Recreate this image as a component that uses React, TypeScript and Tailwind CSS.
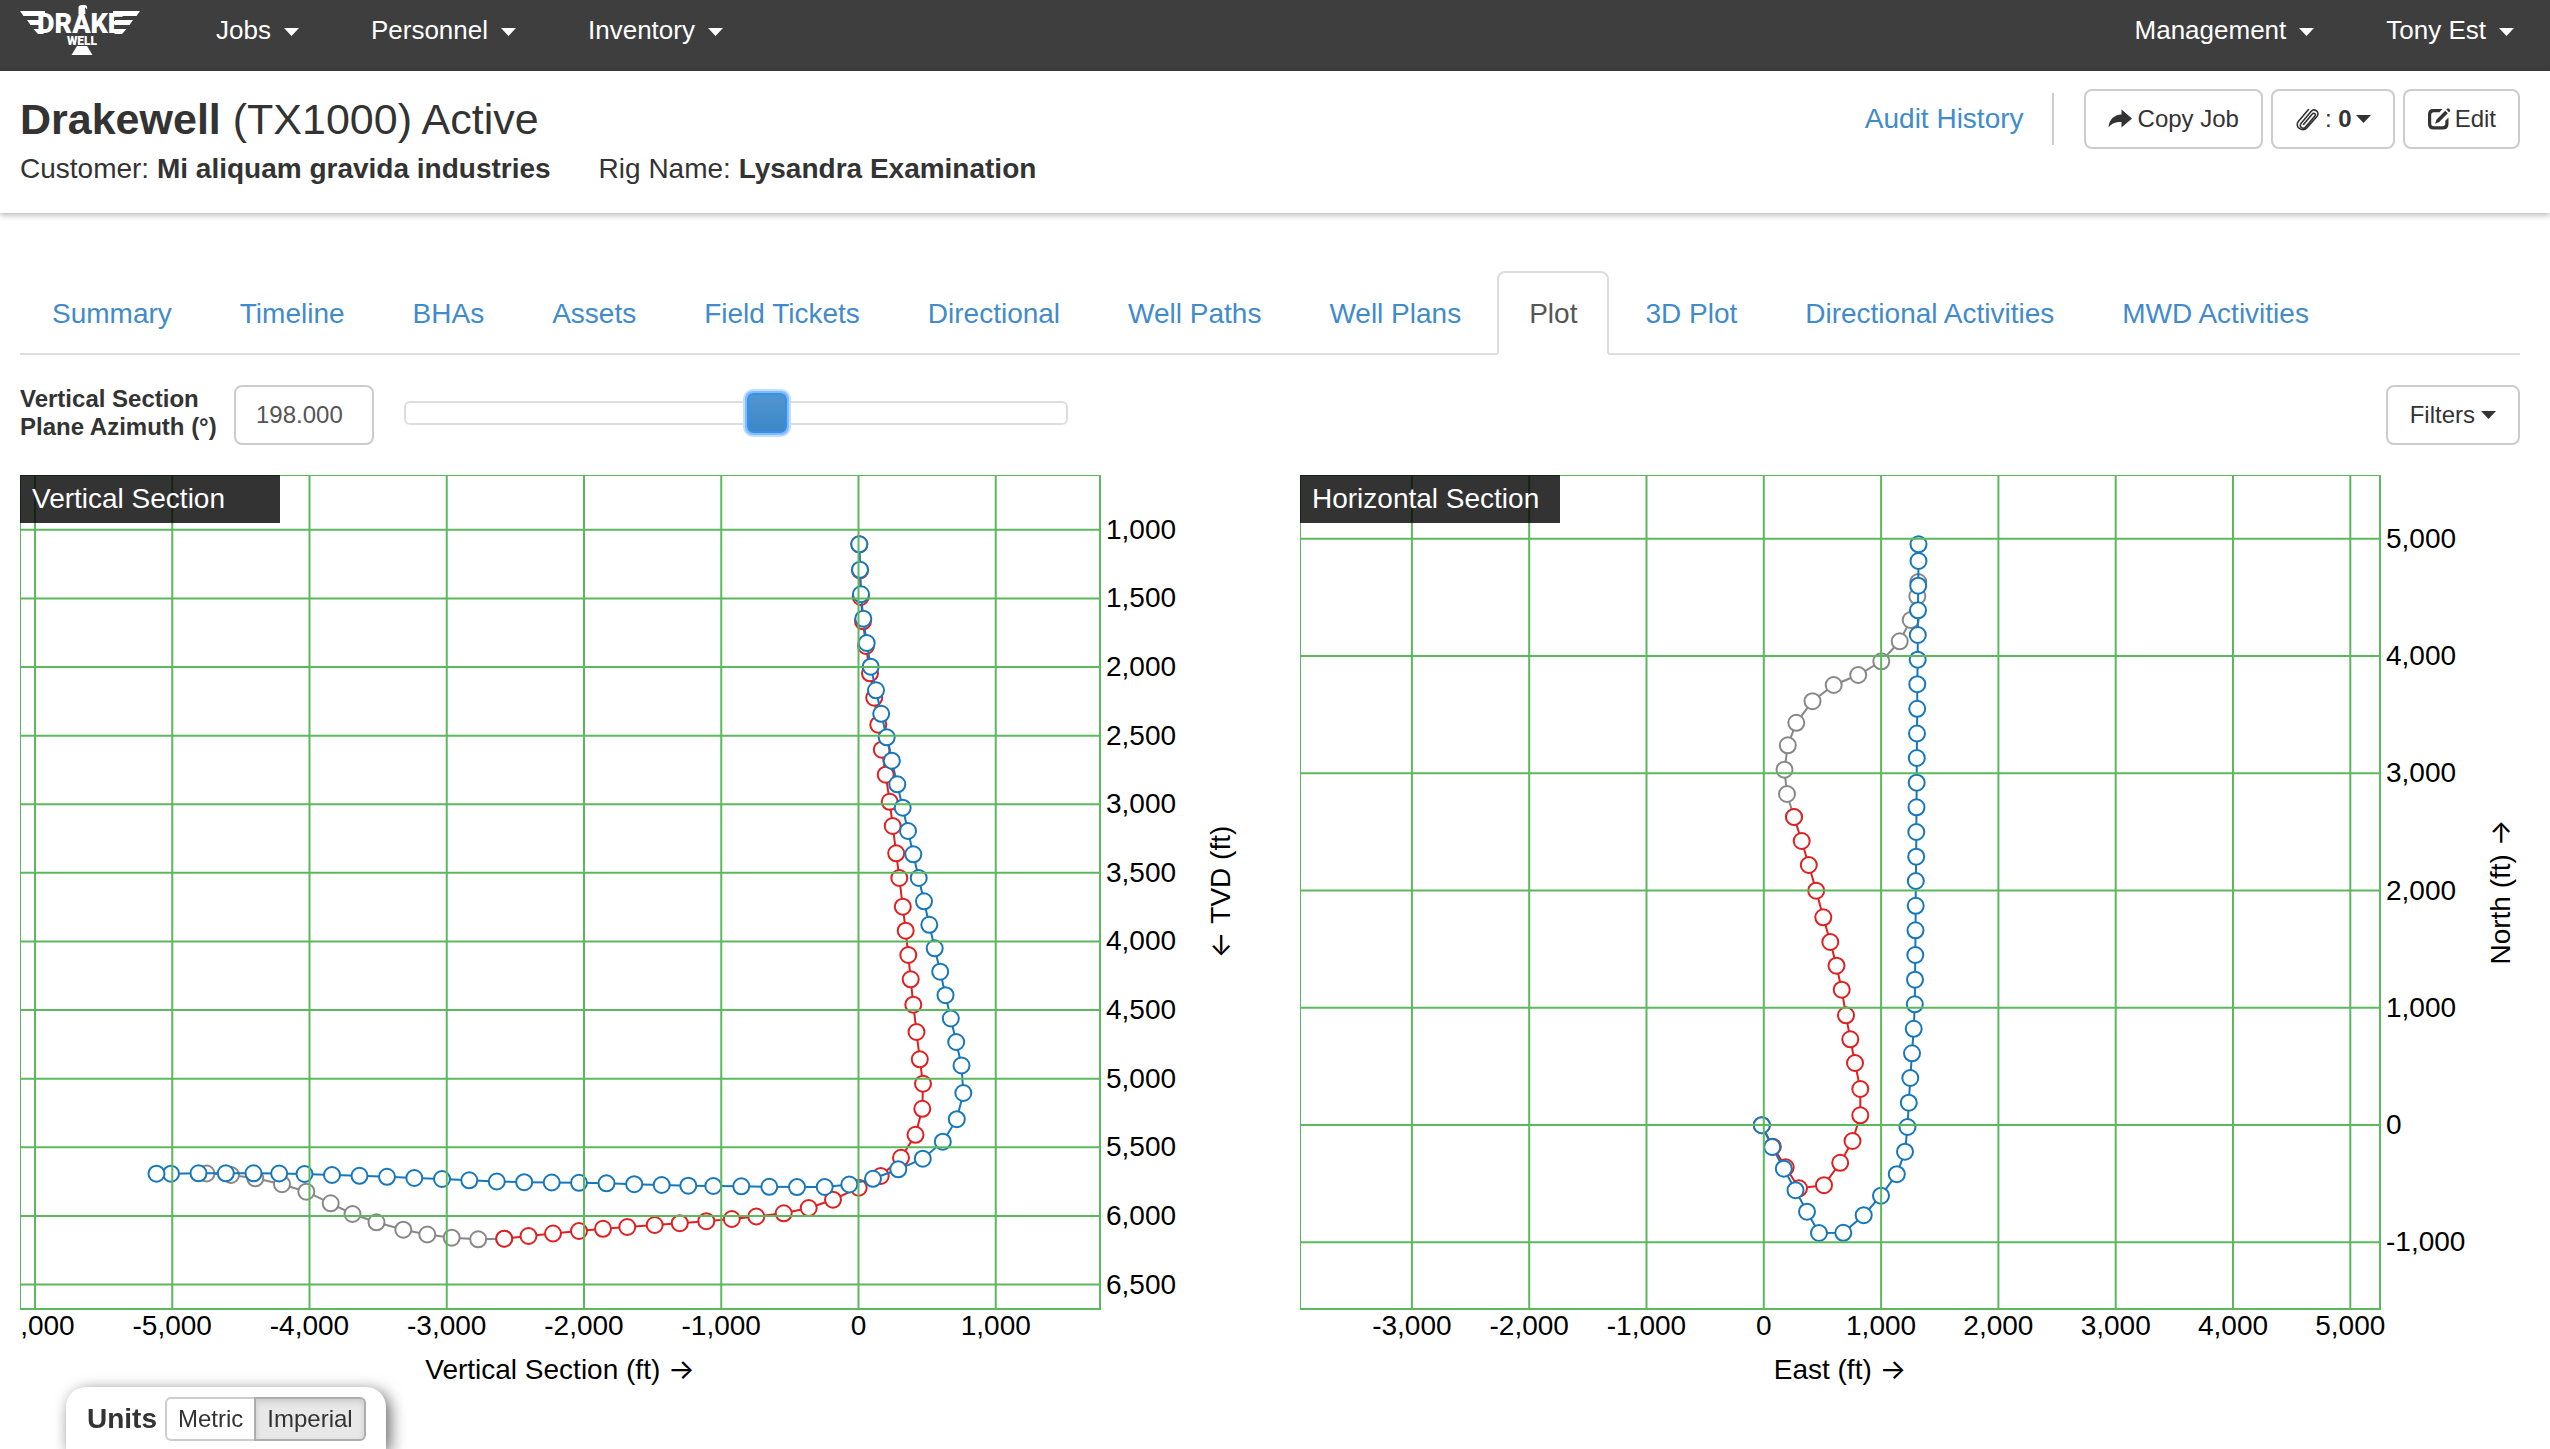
import { useState } from 'react';

type Point = [number, number];

interface Tick {
  at: number;
  label: string;
}

interface Trace {
  stroke: string;
  points: Point[];
}

interface PlotProps {
  title: string;
  originX: number;
  xTitle: string;
  yTitle: string;
  yReversed?: boolean;
  xTicks: Tick[];
  yTicks: Tick[];
  traces: Trace[];
}

const GREEN = '#5cb85c';
const RED = '#e02020';
const BLUE = '#1777bb';
const GREY = '#888888';

const tabs = [
  'Summary',
  'Timeline',
  'BHAs',
  'Assets',
  'Field Tickets',
  'Directional',
  'Well Paths',
  'Well Plans',
  'Plot',
  '3D Plot',
  'Directional Activities',
  'MWD Activities',
];

// Vertical section traces
const vsActual: Point[] = [
  [859.3, 544.3], [860, 570.3], [860.7, 597], [863, 621.3], [866, 646], [870, 673.3], [874.2, 697.7],
  [878.3, 724.7], [881.8, 749.7], [885.7, 774.7], [889.7, 801.8], [892.7, 826], [896.2, 853.3],
  [899.3, 878], [902.8, 906.7], [905.7, 930.7], [908.3, 955], [910.7, 979.3], [913.3, 1004.7],
  [916.5, 1032], [919.8, 1059.3], [923, 1083.7], [922.3, 1108.8], [915.5, 1134.8], [901, 1157.8],
  [880.7, 1176], [858.7, 1187.7], [833, 1199.7], [808.7, 1208], [783.7, 1213.3], [756.3, 1216.5],
  [731.8, 1219], [706.3, 1221.2], [679.8, 1223.2], [654.7, 1225], [627.3, 1227], [603, 1228.8],
  [579, 1231], [553, 1233.5], [528.5, 1236], [504.2, 1238.7],
];

const vsProjected: Point[] = [
  [504.2, 1238.7], [478.2, 1239.3], [451.7, 1237.7], [427.3, 1234.5], [403.3, 1229.7], [376.5, 1222.3],
  [352.5, 1214], [330.7, 1203.3], [306.3, 1191.7], [282, 1184.2], [255.3, 1178.3], [231, 1175],
  [206.5, 1173.5],
];

const vsPlanned: Point[] = [
  [859.3, 544.3], [860, 569.7], [861, 594.3], [863.3, 618.7], [866.7, 643], [870.7, 666.7],
  [876, 690.3], [881.2, 713.8], [886.7, 737.3], [891.8, 760.7], [897.3, 784.3], [902.7, 807.7],
  [908, 831], [913.3, 854.3], [918.7, 878], [924, 901.3], [929.3, 924.8], [934.7, 948.3],
  [940.2, 971.7], [945.5, 995.2], [950.8, 1018.5], [956.2, 1042], [961.5, 1065.5], [963.3, 1093],
  [956.8, 1119.2], [942.8, 1141.7], [922.8, 1158.7], [898.3, 1169.3], [873, 1178.8], [849.3, 1184.5],
  [824.7, 1187], [797, 1187.1], [769.3, 1186.8], [741.3, 1186.3], [713.3, 1186], [688.3, 1185.7],
  [661.7, 1185], [634.2, 1184.2], [606.5, 1183.3], [579, 1182.8], [551.7, 1182.5], [524.2, 1182.2],
  [496.8, 1181.5], [469.3, 1180.3], [442, 1179], [414.3, 1178], [387, 1176.8], [359.5, 1175.8],
  [332, 1175], [304.5, 1174], [279.2, 1173.5], [253.5, 1173.3], [225.8, 1173.3], [198.5, 1173.3],
  [171, 1173.7], [156.5, 1173.7],
];

// Horizontal section traces
const hsActual: Point[] = [
  [1761.8, 1125.2], [1772.8, 1146.7], [1785.7, 1167.3], [1799, 1188.3], [1824, 1185.2], [1840.2, 1162.8],
  [1852.5, 1141], [1860.3, 1115.3], [1860.3, 1089], [1855, 1063], [1850.3, 1039.3], [1846, 1015.3],
  [1841.7, 989.7], [1836.5, 965.7], [1830.3, 942], [1823.3, 917.3], [1816.2, 890.7], [1808.8, 865],
  [1801.7, 841], [1794, 817],
];

const hsProjected: Point[] = [
  [1794, 817], [1787, 794], [1784.5, 769.7], [1787.8, 745.3], [1796.3, 722.8], [1812.5, 701.2],
  [1833.7, 685], [1858.2, 675], [1881.3, 661.3], [1899.7, 641.3], [1910.7, 620], [1917.3, 596.3],
  [1918.3, 582],
];

const hsPlanned: Point[] = [
  [1761.8, 1125.2], [1772.2, 1147], [1783.8, 1168.7], [1795.5, 1190.2], [1807, 1211.7], [1819, 1233],
  [1843.3, 1232.8], [1863.7, 1215.2], [1881, 1195.7], [1896.8, 1174.2], [1905, 1151.7], [1907.5, 1127],
  [1908.8, 1102.7], [1910.3, 1078], [1912, 1053.3], [1913.7, 1028.8], [1914.8, 1004.3], [1915, 979.7],
  [1915.3, 955], [1915.5, 930.3], [1915.7, 905.8], [1915.8, 881], [1916.2, 856.7], [1916.3, 832],
  [1916.5, 807.3], [1916.7, 782.7], [1916.8, 758], [1917, 733.5], [1917.2, 708.8], [1917.3, 684.2],
  [1917.7, 659.7], [1917.8, 635], [1918, 610.3], [1918.2, 585.7], [1918.5, 561], [1918.5, 544.3],
];

function makeTicks(from: number, to: number, step: number, scale: (v: number) => number): Tick[] {
  const ticks: Tick[] = [];
  for (let v = from; v <= to; v += step) {
    ticks.push({ at: scale(v), label: v.toLocaleString('en-US') });
  }
  return ticks;
}

const vsX = makeTicks(-6000, 1000, 1000, (v) => 858.5 + v * 0.13725);
const vsY = makeTicks(1000, 6500, 500, (v) => 529.8 + (v - 1000) * 0.13722);
const hsX = makeTicks(-3000, 5000, 1000, (v) => 1763.8 + v * 0.1173);
const hsY = makeTicks(-1000, 5000, 1000, (v) => 1125 - v * 0.11725);

function Caret() {
  return (
    <svg className="w-[15px] h-2 shrink-0" viewBox="0 0 15 8" fill="currentColor" aria-hidden="true">
      <path d="M0 0h15L7.500 8z" />
    </svg>
  );
}

function Logo() {
  return (
    <svg className="w-[120px] h-[50px]" viewBox="20 5 120 50" fill="#fff" role="img" aria-label="Drake Well">
      {/* wings */}
      <path d="M20 11h25v5H23.500zM27 20h16v5H30.500zM33.500 29h10v5H38z" />
      <path d="M140 11h-27v5h23.500zM133 20h-18v5h14.500zM126.500 29h-12v5h7.500z" />
      {/* eagle head and tail */}
      <path d="M78.500 14v-6.500q0-2.500 3.500-2.500h3q3 .5 2 4.500l-1.700-2q-1 1.500 0 3v3.500z" />
      <path d="M77 46h10l5.500 9h-21z" />
      <text x="80" y="33" textAnchor="middle" fontFamily="Roboto, sans-serif" fontWeight="900" fontSize="27">
        DRAKE
      </text>
      <text x="82" y="45" textAnchor="middle" fontFamily="Roboto, sans-serif" fontWeight="900" fontSize="12">
        WELL
      </text>
    </svg>
  );
}

function ShareIcon() {
  return (
    <svg className="w-6 h-6" viewBox="0 0 24 24" fill="currentColor" aria-hidden="true">
      <path d="M13.500 2.500 24 11.500l-10.500 9v-5.600C7.500 14.800 3.500 16.500.500 20.500 1.200 12.500 6 8 13.500 7.600z" />
    </svg>
  );
}

function ClipIcon() {
  return (
    <svg className="w-[26px] h-6" viewBox="0 0 26 24" fill="none" stroke="currentColor" strokeWidth="1.600" strokeLinecap="round" aria-hidden="true">
      <path d="M8.500 17.500 17.300 7c1.600-2 4.200.2 2.600 2.100L10.500 20c-2.700 3-7-.6-4.500-3.600L16 4.500c3.300-3.800 9.300.8 6.100 4.800L11.800 21C7.300 25.800-.8 19.500 3.300 14.500L13.500 2.500" />
    </svg>
  );
}

function EditIcon() {
  return (
    <svg className="w-6 h-6" viewBox="0 0 24 24" fill="currentColor" aria-hidden="true">
      <path d="M6 2h9.500l-3 3.200H7Q4.200 5.200 4.200 8v8.500q0 2.800 2.800 2.800h8.500q2.800 0 2.800-2.800v-2.700l3.200-3.300V17q0 5.500-5.500 5.500H6.500Q1 22.500 1 17V7.500Q1 2 6 2z" />
      <path d="M18.200 3.700l2.600 2.600-8.600 8.800-4.200 1.700 1.600-4.300zM19.300 2.600l.9-.9q.9-.7 1.800 0l.9 1q.7.8 0 1.700l-1 .9z" />
    </svg>
  );
}

function Plot({ title, originX, xTitle, yTitle, yReversed, xTicks, yTicks, traces }: PlotProps) {
  const left = originX;
  const right = originX + 1080;
  const top = 475;
  const bottom = 1309;

  return (
    <figure className="relative">
      <figcaption className="absolute left-0 top-0 w-[260px] h-12 px-3 bg-black/80 text-white text-[28px] leading-[48px] whitespace-nowrap">
        {title}
      </figcaption>
      <svg className="block w-full" viewBox={`${originX} 475 1220 920`} fontFamily="'Liberation Sans', Arial, sans-serif" fontSize="28">
        {traces.map((trace, i) => (
          <g key={i} stroke={trace.stroke} strokeWidth="2">
            <polyline fill="none" points={trace.points.map((p) => p.join(',')).join(' ')} />
            {trace.points.map(([x, y], j) => (
              <circle key={j} cx={x} cy={y} r="8" fill="#fff" />
            ))}
          </g>
        ))}
        <g stroke={GREEN} strokeWidth="2">
          {xTicks.map((t) => (
            <line key={t.label} x1={t.at} x2={t.at} y1={top} y2={bottom} />
          ))}
          {yTicks.map((t) => (
            <line key={t.label} x1={left} x2={right} y1={t.at} y2={t.at} />
          ))}
          <rect x={left} y={top} width={right - left} height={bottom - top} fill="none" />
        </g>
        {xTicks.map((t) => (
          <text key={t.label} x={t.at} y="1335" textAnchor="middle">{t.label}</text>
        ))}
        {yTicks.map((t) => (
          <text key={t.label} x={right + 6} y={t.at + 9}>{t.label}</text>
        ))}
        <text x={(left + right) / 2} y="1379" textAnchor="middle">
          {xTitle} <tspan fontFamily="Inter, sans-serif">→</tspan>
        </text>
        <text transform={`translate(${originX + 1210} 892) rotate(-90)`} textAnchor="middle">
          {yReversed && <tspan fontFamily="Inter, sans-serif">← </tspan>}
          {yTitle}
          {!yReversed && <tspan fontFamily="Inter, sans-serif"> →</tspan>}
        </text>
      </svg>
    </figure>
  );
}

export default function App() {
  const [azimuth, setAzimuth] = useState(198);
  const [units, setUnits] = useState('Imperial');

  const button = 'h-[60px] px-[22px] flex items-center border-2 border-[#ccc] rounded-lg bg-white text-2xl text-[#333] whitespace-nowrap';

  return (
    <div className="min-h-screen bg-white text-[#333] font-['Liberation_Sans',Arial,sans-serif]">
      <nav className="h-[71px] bg-[#3e3e3e] text-white text-[26px] flex items-start px-5">
        <a href="#" className="pt-[5px]">
          <Logo />
        </a>
        <div className="ml-10 flex">
          {['Jobs', 'Personnel', 'Inventory'].map((item) => (
            <button key={item} type="button" className="h-[60px] px-9 flex items-center gap-[13px]">
              {item}
              <span className="pt-1"><Caret /></span>
            </button>
          ))}
        </div>
        <div className="ml-auto flex">
          {['Management', 'Tony Est'].map((item) => (
            <button key={item} type="button" className="h-[60px] pl-9 pr-9 last:pr-4 flex items-center gap-[13px]">
              {item}
              <span className="pt-1"><Caret /></span>
            </button>
          ))}
        </div>
      </nav>

      <header className="h-[142px] px-5 pt-[18px] flex items-start justify-between shadow-[0_2px_6px_rgba(0,0,0,0.3)]">
        <div className="pt-1">
          <h1 className="text-[43px] leading-[52px]">
            <b>Drakewell</b> (TX1000) Active
          </h1>
          <p className="text-[28px] leading-10 flex gap-12 mt-1">
            <span>Customer: <b>Mi aliquam gravida industries</b></span>
            <span>Rig Name: <b>Lysandra Examination</b></span>
          </p>
        </div>
        <div className="flex items-center pr-[10px]">
          <a href="#" className="text-[28px] text-[#428bca]">Audit History</a>
          <span className="w-[2px] h-[52px] bg-[#ccc] ml-7 mr-[30px]" />
          <div className="flex gap-2">
            <button type="button" className={`${button} gap-[6px]`}>
              <ShareIcon />
              Copy Job
            </button>
            <button type="button" className={`${button} gap-1`} aria-label="Attachments: 0">
              <ClipIcon />
              <span>: <b>0</b></span>
              <Caret />
            </button>
            <button type="button" className={`${button} gap-1`}>
              <EditIcon />
              Edit
            </button>
          </div>
        </div>
      </header>

      <main className="pl-5 pr-[30px] pt-[58px]">
        <ul className="flex gap-1 border-b-2 border-[#ddd] text-[28px] leading-[42px]">
          {tabs.map((tab) => (
            <li key={tab} className="-mb-[2px]">
              <a
                href="#"
                className={
                  tab === 'Plot'
                    ? 'block h-[84px] px-[30px] pt-5 border-2 border-[#ddd] border-b-white rounded-t-lg bg-white text-[#555]'
                    : 'block h-[84px] px-[30px] pt-5 border-2 border-transparent text-[#428bca]'
                }
              >
                {tab}
              </a>
            </li>
          ))}
        </ul>

        <div className="flex items-start mt-[30px] h-[60px]">
          <label htmlFor="azimuth" className="w-[214px] text-2xl leading-7 font-bold">
            Vertical Section
            <br />
            Plane Azimuth (°)
          </label>
          <input
            id="azimuth"
            type="text"
            className="w-[140px] h-[60px] px-5 border-2 border-[#ccc] rounded-lg text-2xl text-[#555]"
            value={azimuth.toFixed(3)}
            onChange={(e) => setAzimuth(Number(e.target.value) || 0)}
          />
          <input
            type="range"
            aria-label="Plane azimuth"
            min={0}
            max={360}
            value={azimuth}
            onChange={(e) => setAzimuth(Number(e.target.value))}
            className="ml-[30px] mt-4 w-[664px] h-6 appearance-none rounded-md border-2 border-[#ddd] bg-white outline-none [&::-webkit-slider-thumb]:appearance-none [&::-webkit-slider-thumb]:w-10 [&::-webkit-slider-thumb]:h-10 [&::-webkit-slider-thumb]:rounded-md [&::-webkit-slider-thumb]:border-2 [&::-webkit-slider-thumb]:border-[#3a8fe8] [&::-webkit-slider-thumb]:bg-linear-to-b [&::-webkit-slider-thumb]:from-[#5095d0] [&::-webkit-slider-thumb]:to-[#3d87c8] [&::-webkit-slider-thumb]:shadow-[0_0_0_2px_#7fbcfb,0_0_0_4px_#c2dffc]"
          />
          <button type="button" className={`${button} gap-[6px] ml-auto`}>
            Filters
            <Caret />
          </button>
        </div>

        <div className="grid grid-cols-2 gap-[60px] mt-[30px] text-black">
          <Plot
            title="Vertical Section"
            originX={20}
            xTitle="Vertical Section (ft)"
            yTitle="TVD (ft)"
            yReversed
            xTicks={vsX}
            yTicks={vsY}
            traces={[
              { stroke: GREY, points: vsProjected },
              { stroke: RED, points: vsActual },
              { stroke: BLUE, points: vsPlanned },
            ]}
          />
          <Plot
            title="Horizontal Section"
            originX={1300}
            xTitle="East (ft)"
            yTitle="North (ft)"
            xTicks={hsX}
            yTicks={hsY}
            traces={[
              { stroke: GREY, points: hsProjected },
              { stroke: RED, points: hsActual },
              { stroke: BLUE, points: hsPlanned },
            ]}
          />
        </div>
      </main>

      <div className="fixed left-[66px] bottom-0 h-[62px] w-80 pl-[21px] pt-[10px] flex items-start gap-2 rounded-t-[20px] bg-white shadow-[4px_4px_16px_rgba(0,0,0,0.6)]">
        <span className="text-[28px] leading-[44px] font-bold">Units</span>
        <div className="flex text-2xl">
          {['Metric', 'Imperial'].map((u) => (
            <button
              key={u}
              type="button"
              aria-pressed={units === u}
              onClick={() => setUnits(u)}
              className={
                units === u
                  ? 'h-11 px-[11px] border-2 border-[#adadad] bg-[#e8e8e8] shadow-[inset_0_3px_6px_rgba(0,0,0,0.125)] -ml-[2px] last:rounded-r-md first:rounded-l-md'
                  : 'h-11 px-[11px] border-2 border-[#ccc] bg-white last:rounded-r-md first:rounded-l-md'
              }
            >
              {u}
            </button>
          ))}
        </div>
      </div>
    </div>
  );
}
